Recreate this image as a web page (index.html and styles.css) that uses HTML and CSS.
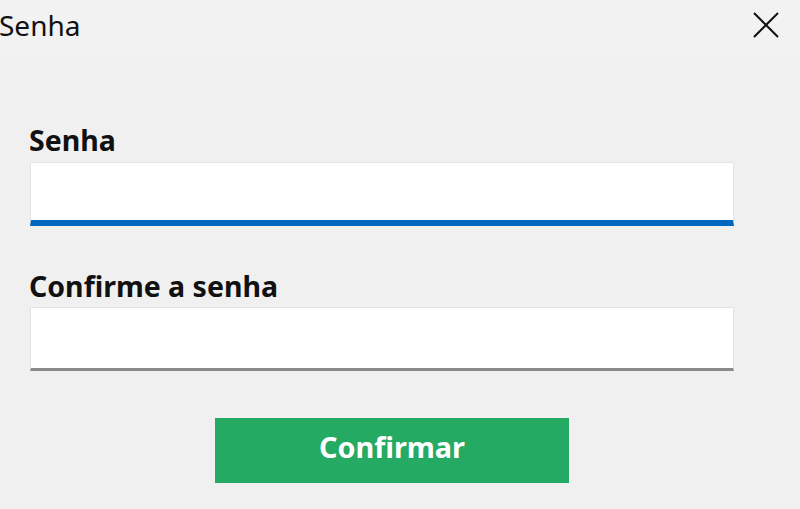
FILE: index.html
```html
<!DOCTYPE html>
<html lang="pt">
<head>
<meta charset="utf-8">
<link rel="stylesheet" href="styles.css">
</head>
<body>
<div class="window">
  <header class="titlebar">
    <span class="title">Senha</span>
    <button class="close" aria-label="Fechar">
      <svg width="28" height="28" viewBox="0 0 28 28"><path d="M2 2 L26 26 M26 2 L2 26" stroke="#111" stroke-width="2" fill="none"/></svg>
    </button>
  </header>
  <main class="content">
    <label class="label">Senha</label>
    <div class="input active"></div>
    <label class="label second">Confirme a senha</label>
    <div class="input"></div>
    <div class="actions">
      <button class="confirm">Confirmar</button>
    </div>
  </main>
</div>
</body>
</html>
```
FILE: styles.css
```css
* { box-sizing: border-box; }
html, body { margin: 0; padding: 0; }
body {
  width: 800px;
  height: 509px;
  background: #f0f0f0;
  font-family: "Noto Sans", "Open Sans", sans-serif;
  overflow: hidden;
}
.titlebar {
  height: 57px;
  background: #f2f2f2;
  display: flex;
  align-items: center;
  justify-content: space-between;
  padding: 0 20px 7px 0;
}
.title {
  font-size: 28px;
  color: #111;
  line-height: 1;
  margin-left: -1px;
}
.close {
  border: none;
  background: transparent;
  padding: 0;
  width: 28px;
  height: 28px;
  display: flex;
}
.content {
  display: flex;
  flex-direction: column;
  padding: 65px 66px 0 30px;
}
.label {
  font-weight: 700;
  font-size: 28.5px;
  color: #111;
  line-height: 36px;
  margin-left: -1px;
  margin-bottom: 4px;
}
.label.second { margin-top: 42px; margin-bottom: 3px; }
.input {
  height: 64px;
  background: #fff;
  border: 1px solid #e4e4e4;
  border-bottom: 3px solid #8a8a8a;
}
.input.active {
  border-bottom: 6px solid #0067c0;
}
.actions {
  display: flex;
  justify-content: center;
  padding-top: 47px;
  padding-left: 20px;
}
.confirm {
  width: 354px;
  height: 65px;
  border: none;
  background: #24aa62;
  color: #fff;
  font-family: inherit;
  font-weight: 700;
  font-size: 28.8px;
  padding: 0 0 8px;
}
```
